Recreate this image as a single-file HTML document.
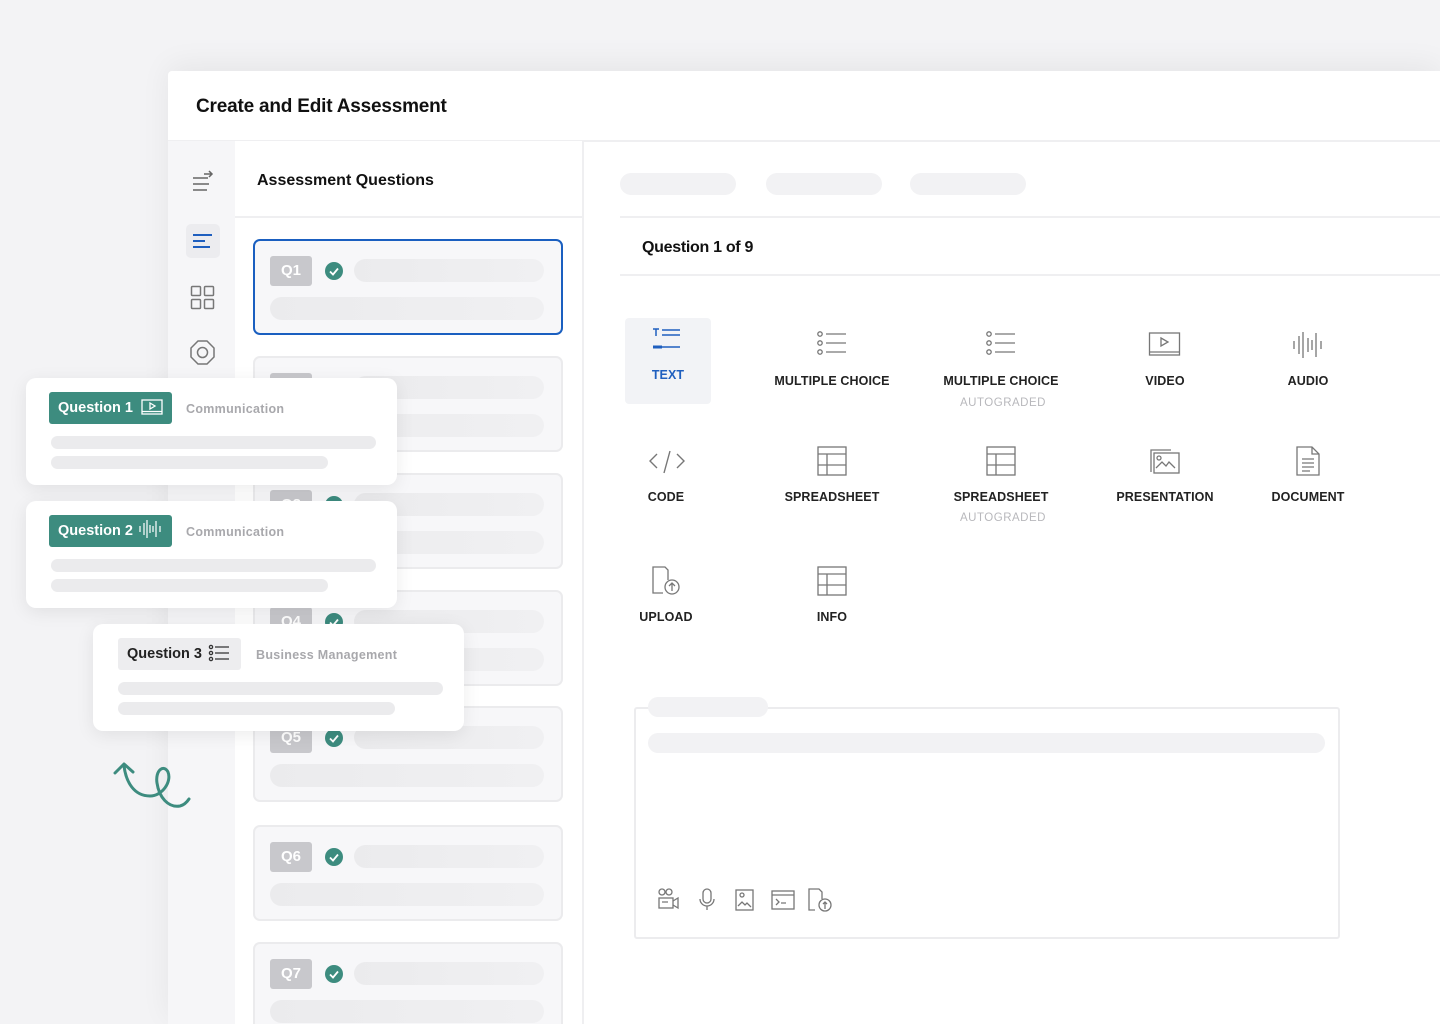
<!DOCTYPE html>
<html style="overflow:hidden;width:1440px;height:1024px"><head><meta charset="utf-8">
<style>
*{box-sizing:border-box;margin:0;padding:0}
body{width:1440px;height:1024px;overflow:hidden;background:#f3f3f5;font-family:"Liberation Sans",sans-serif;position:relative}
.a{position:absolute}
.win{left:168px;top:71px;width:1272px;height:953px;background:#fff;border-radius:4px 0 0 0;box-shadow:0 -6px 30px rgba(0,0,0,0.06)}
.title{left:196px;top:96px;font-size:19px;font-weight:700;color:#111;letter-spacing:-0.2px}
.hline{background:#efeff1;height:2px}
.side{left:168px;top:141px;width:67px;height:883px;background:#f6f6f8}
.qp{left:235px;top:141px;width:349px;height:883px;background:#fff;border-right:2px solid #efeff1}
.card{left:253px;width:310px;height:96px;background:#f7f7f9;border:2px solid #ebebed;border-radius:7px}
.card .b{position:absolute;left:15px;top:15px;width:42px;height:30px;background:#c8c8cc;border-radius:3px;color:#fff;font-weight:700;font-size:15px;text-align:center;line-height:30px}
.card .c{position:absolute;left:70px;top:21px;width:18px;height:18px;border-radius:50%;background:#3d8c7f}
.card .c svg{position:absolute;left:0;top:0}
.card .r1{position:absolute;left:99px;top:18px;width:190px;height:23px;border-radius:12px;background:linear-gradient(90deg,#ebebed,#f0f0f2)}
.card .r2{position:absolute;left:15px;top:56px;width:274px;height:23px;border-radius:12px;background:linear-gradient(90deg,#ebebed,#f0f0f2)}
.pill{top:173px;width:116px;height:22px;border-radius:11px;background:#f2f2f4}
.lbl{font-size:12.5px;font-weight:700;color:#222;text-align:center;width:160px;letter-spacing:0.1px}
.sub{font-size:11.5px;color:#b8b8bc;text-align:center;width:160px;letter-spacing:0.5px}
.fc{background:#fff;border-radius:10px;box-shadow:0 4px 18px rgba(0,0,0,0.08);width:371px;height:107px}
.fc .bd{position:absolute;left:23px;top:14px;height:32px;border-radius:3px;font-size:14.5px;font-weight:700;line-height:32px;padding-left:9px;width:123px}
.fc .cat{position:absolute;left:160px;top:24px;font-size:12.5px;color:#a8a8ac;font-weight:700;letter-spacing:0.3px}
.fc .l1{position:absolute;left:25px;top:58px;width:325px;height:13px;border-radius:7px;background:#ebebed}
.fc .l2{position:absolute;left:25px;top:78px;width:277px;height:13px;border-radius:7px;background:#ebebed}
</style></head><body>
<div class="a win"></div>
<div class="a title">Create and Edit Assessment</div>
<div class="a hline" style="left:168px;top:140px;width:1272px"></div>
<div class="a side"></div>
<svg class="a" style="left:190px;top:170px" width="26" height="24" viewBox="0 0 26 24" fill="none" stroke="#666" stroke-width="1.5"><path d="M3 8h15M3 14h16M3 20h14M14 4h8M19 1l3 3-3 3"/></svg>
<div class="a" style="left:186px;top:224px;width:34px;height:34px;border-radius:5px;background:#ececef"></div>
<svg class="a" style="left:192px;top:232px" width="22" height="18" viewBox="0 0 22 18" fill="none" stroke="#1f5fbf" stroke-width="2"><path d="M1 3h19M1 9h12M1 15h17"/></svg>
<svg class="a" style="left:190px;top:285px" width="26" height="26" viewBox="0 0 26 26" fill="none" stroke="#777" stroke-width="1.5"><rect x="1.5" y="1.5" width="9" height="9" rx="1"/><rect x="14.5" y="1.5" width="9" height="9" rx="1"/><rect x="1.5" y="14.5" width="9" height="9" rx="1"/><rect x="14.5" y="14.5" width="9" height="9" rx="1"/></svg>
<svg class="a" style="left:189px;top:339px" width="27" height="27" viewBox="0 0 27 27" fill="none" stroke="#777" stroke-width="1.5"><path d="M9 2h9l7 7v9l-7 7H9l-7-7V9z"/><circle cx="13.5" cy="13.5" r="5"/></svg>

<div class="a qp"></div>
<div class="a" style="left:257px;top:172px;font-size:16px;font-weight:700;color:#111">Assessment Questions</div>
<div class="a hline" style="left:235px;top:216px;width:349px"></div>

<div class="a card" style="top:239px;border-color:#1a5fc0"><div class="b">Q1</div><div class="c"><svg width="18" height="18"><path d="M5 9.5l3 3 5-6" stroke="#fff" stroke-width="1.8" fill="none"/></svg></div><div class="r1"></div><div class="r2"></div></div>
<div class="a card" style="top:356px"><div class="b">Q2</div><div class="c"><svg width="18" height="18"><path d="M5 9.5l3 3 5-6" stroke="#fff" stroke-width="1.8" fill="none"/></svg></div><div class="r1"></div><div class="r2"></div></div>
<div class="a card" style="top:473px"><div class="b">Q3</div><div class="c"><svg width="18" height="18"><path d="M5 9.5l3 3 5-6" stroke="#fff" stroke-width="1.8" fill="none"/></svg></div><div class="r1"></div><div class="r2"></div></div>
<div class="a card" style="top:590px"><div class="b">Q4</div><div class="c"><svg width="18" height="18"><path d="M5 9.5l3 3 5-6" stroke="#fff" stroke-width="1.8" fill="none"/></svg></div><div class="r1"></div><div class="r2"></div></div>
<div class="a card" style="top:706px"><div class="b">Q5</div><div class="c"><svg width="18" height="18"><path d="M5 9.5l3 3 5-6" stroke="#fff" stroke-width="1.8" fill="none"/></svg></div><div class="r1"></div><div class="r2"></div></div>
<div class="a card" style="top:825px"><div class="b">Q6</div><div class="c"><svg width="18" height="18"><path d="M5 9.5l3 3 5-6" stroke="#fff" stroke-width="1.8" fill="none"/></svg></div><div class="r1"></div><div class="r2"></div></div>
<div class="a card" style="top:942px;height:82px;border-bottom:none;border-radius:7px 7px 0 0"><div class="b">Q7</div><div class="c"><svg width="18" height="18"><path d="M5 9.5l3 3 5-6" stroke="#fff" stroke-width="1.8" fill="none"/></svg></div><div class="r1"></div><div class="r2"></div></div>

<div class="a pill" style="left:620px"></div>
<div class="a pill" style="left:766px"></div>
<div class="a pill" style="left:910px"></div>
<div class="a hline" style="left:620px;top:216px;width:820px"></div>
<div class="a" style="left:642px;top:239px;font-size:16px;font-weight:700;color:#111;letter-spacing:-0.3px">Question 1 of 9</div>
<div class="a hline" style="left:620px;top:274px;width:820px"></div>

<div class="a" style="left:625px;top:318px;width:86px;height:86px;background:#f2f3f6;border-radius:4px"></div>
<svg class="a" style="left:650px;top:326px" width="32" height="26" viewBox="0 0 32 26" fill="none" stroke="#1f5fbf" stroke-width="1.5"><path d="M3 3h6M6 3v7M12 4h18M12 9h18M3 21h27"/><path d="M3 21h9" stroke-width="3"/></svg>
<div class="a lbl" style="left:588px;top:368px;color:#1f5fbf">TEXT</div>

<svg class="a" style="left:815px;top:330px" width="34" height="28" viewBox="0 0 34 28" fill="none" stroke="#777" stroke-width="1.3"><circle cx="5" cy="4" r="2.2"/><circle cx="5" cy="13" r="2.2"/><circle cx="5" cy="22" r="2.2"/><path d="M11 4h20M11 13h20M11 22h20"/></svg>
<div class="a lbl" style="left:752px;top:374px">MULTIPLE CHOICE</div>
<svg class="a" style="left:984px;top:330px" width="34" height="28" viewBox="0 0 34 28" fill="none" stroke="#777" stroke-width="1.3"><circle cx="5" cy="4" r="2.2"/><circle cx="5" cy="13" r="2.2"/><circle cx="5" cy="22" r="2.2"/><path d="M11 4h20M11 13h20M11 22h20"/></svg>
<div class="a lbl" style="left:921px;top:374px">MULTIPLE CHOICE</div>
<div class="a sub" style="left:923px;top:397px">AUTOGRADED</div>
<svg class="a" style="left:1148px;top:331px" width="34" height="28" viewBox="0 0 34 28" fill="none" stroke="#777" stroke-width="1.3"><rect x="1.5" y="2" width="30" height="22"/><path d="M1.5 21h30"/><path d="M13 7l7 4-7 4z"/></svg>
<div class="a lbl" style="left:1085px;top:374px">VIDEO</div>
<svg class="a" style="left:1292px;top:330px" width="32" height="30" viewBox="0 0 32 30" fill="none" stroke="#777" stroke-width="1.3"><path d="M2 11v8M7 6v18M11 2v26M16 8v14M20 10v10M24 3v24M29 11v8"/></svg>
<div class="a lbl" style="left:1228px;top:374px">AUDIO</div>

<svg class="a" style="left:648px;top:448px" width="38" height="28" viewBox="0 0 38 28" fill="none" stroke="#777" stroke-width="1.4"><path d="M9 6L2 13l7 7M29 6l7 7-7 7M22 3l-6 22"/></svg>
<div class="a lbl" style="left:586px;top:490px">CODE</div>
<svg class="a" style="left:816px;top:445px" width="32" height="32" viewBox="0 0 32 32" fill="none" stroke="#777" stroke-width="1.3"><rect x="2" y="2" width="28" height="28"/><path d="M2 9h28M2 20h28M11 9v21"/></svg>
<div class="a lbl" style="left:752px;top:490px">SPREADSHEET</div>
<svg class="a" style="left:985px;top:445px" width="32" height="32" viewBox="0 0 32 32" fill="none" stroke="#777" stroke-width="1.3"><rect x="2" y="2" width="28" height="28"/><path d="M2 9h28M2 20h28M11 9v21"/></svg>
<div class="a lbl" style="left:921px;top:490px">SPREADSHEET</div>
<div class="a sub" style="left:923px;top:512px">AUTOGRADED</div>
<svg class="a" style="left:1148px;top:446px" width="34" height="30" viewBox="0 0 34 30" fill="none" stroke="#777" stroke-width="1.3"><path d="M3 26V4h20"/><rect x="6" y="7" width="25" height="20"/><circle cx="11" cy="12" r="2"/><path d="M8 22l6-6 4 4 3-4 6 6"/></svg>
<div class="a lbl" style="left:1085px;top:490px">PRESENTATION</div>
<svg class="a" style="left:1294px;top:445px" width="28" height="32" viewBox="0 0 28 32" fill="none" stroke="#777" stroke-width="1.3"><path d="M3 2h15l7 7v21H3z"/><path d="M18 2v7h7M8 14h12M8 18h12M8 22h12M8 26h8"/></svg>
<div class="a lbl" style="left:1228px;top:490px">DOCUMENT</div>

<svg class="a" style="left:650px;top:565px" width="34" height="32" viewBox="0 0 34 32" fill="none" stroke="#777" stroke-width="1.3"><path d="M13 28H3V2h12l3 3v10"/><circle cx="22" cy="22" r="7"/><path d="M22 26v-8M19 21l3-3 3 3"/></svg>
<div class="a lbl" style="left:586px;top:610px">UPLOAD</div>
<svg class="a" style="left:816px;top:565px" width="32" height="32" viewBox="0 0 32 32" fill="none" stroke="#777" stroke-width="1.3"><rect x="2" y="2" width="28" height="28"/><path d="M2 9h28M2 20h28M11 9v21"/></svg>
<div class="a lbl" style="left:752px;top:610px">INFO</div>

<div class="a" style="left:634px;top:707px;width:706px;height:232px;border:2px solid #ececee;border-radius:3px;background:#fff"></div>
<div class="a" style="left:648px;top:697px;width:120px;height:20px;border-radius:10px;background:#f2f2f4"></div>
<div class="a" style="left:648px;top:733px;width:677px;height:20px;border-radius:10px;background:#f2f2f4"></div>
<svg class="a" style="left:656px;top:887px" width="180" height="28" viewBox="0 0 180 28" fill="none" stroke="#777" stroke-width="1.3"><circle cx="6" cy="5" r="3"/><circle cx="13" cy="5" r="3"/><rect x="3" y="11" width="14" height="10"/><path d="M17 14l5-3v10l-5-3M6 15h6"/><rect x="47" y="2" width="8" height="14" rx="4"/><path d="M44 12a7 7 0 0014 0M51 19v4"/><rect x="80" y="3" width="17" height="20"/><circle cx="86" cy="8" r="2"/><path d="M82 19l4-4 3 3 2-2 4 4"/><rect x="116" y="4" width="22" height="18"/><path d="M116 8h22M120 12l3 3-3 3M125 16h5"/><path d="M159 23h-6V2h10l3 3v7"/><circle cx="169" cy="18" r="6"/><path d="M169 22v-7M167 17l2-2 2 2"/></svg>

<div class="a fc" style="left:26px;top:378px"><div class="bd" style="background:#3d8c7f;color:#fff">Question 1 <svg style="vertical-align:-4px;margin-left:4px" width="22" height="18" viewBox="0 0 22 18" fill="none" stroke="#fff" stroke-width="1.3"><rect x="1" y="2" width="20" height="14"/><path d="M1 13.5h20M9 5l5 3-5 3z"/></svg></div><div class="cat">Communication</div><div class="l1"></div><div class="l2"></div></div>
<div class="a fc" style="left:26px;top:501px"><div class="bd" style="background:#3d8c7f;color:#fff">Question 2 <svg style="vertical-align:-4px;margin-left:2px" width="22" height="20" viewBox="0 0 22 20" fill="none" stroke="#fff" stroke-width="1.2"><path d="M1 7v6M5 4v12M8 1v18M11 6v8M14 7v6M17 2v16M21 7v6"/></svg></div><div class="cat">Communication</div><div class="l1"></div><div class="l2"></div></div>
<div class="a fc" style="left:93px;top:624px"><div class="bd" style="background:#ededef;color:#222;left:25px">Question 3 <svg style="vertical-align:-4px;margin-left:2px" width="22" height="18" viewBox="0 0 22 18" fill="none" stroke="#333" stroke-width="1.3"><circle cx="3" cy="3" r="1.6"/><circle cx="3" cy="9" r="1.6"/><circle cx="3" cy="15" r="1.6"/><path d="M7 3h14M7 9h14M7 15h14"/></svg></div><div class="cat" style="left:163px">Business Management</div><div class="l1" style="left:25px"></div><div class="l2" style="left:25px"></div></div>

<svg class="a" style="left:0;top:0" width="200" height="820" viewBox="0 0 200 820" fill="none" stroke="#3d8c7f" stroke-width="3" stroke-linecap="round" stroke-linejoin="round"><path d="M115 773l9-9 9 8M124 766C126 782 134 796 150 796C162 796 172 782 168 772C164 764 155 770 157 783C159 797 168 808 180 806C184 805 187 802 189 799"/></svg>
</body></html>
